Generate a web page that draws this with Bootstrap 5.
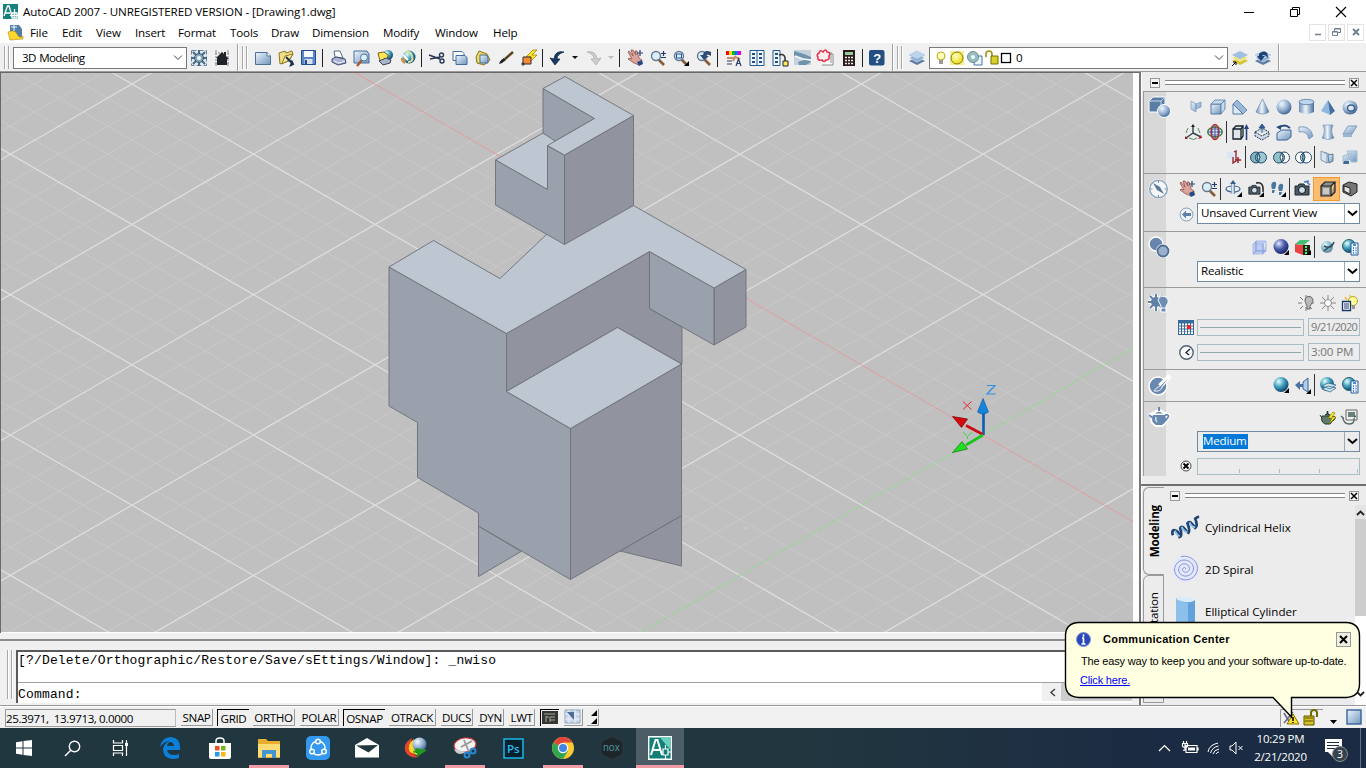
<!DOCTYPE html>
<html lang="en">
<head>
<meta charset="utf-8">
<title>AutoCAD 2007</title>
<link href="https://cdn.jsdelivr.net/npm/bootstrap@5.3.0/dist/css/bootstrap.min.css" rel="stylesheet">
<style>
html,body{width:1366px;height:768px;overflow:hidden}
body{font:11.6px/15px "Open Sans","Noto Sans",sans-serif;color:#000;background:#f0f0f0;letter-spacing:-.15px}
svg{display:block;overflow:visible;flex:none}
.titlebar{height:23px;padding-left:3px;padding-right:2px;background:#fff;letter-spacing:-.08px}
.titlebar .cap{width:46px}
.menubar{height:20px;background:#fff;padding:0 0 2px 8px}
.menubar a{color:#000;text-decoration:none;white-space:nowrap}
.menubar a:nth-of-type(1){width:32px}.menubar a:nth-of-type(2){width:34px}.menubar a:nth-of-type(3){width:39px}
.menubar a:nth-of-type(4){width:43px}.menubar a:nth-of-type(5){width:52px}.menubar a:nth-of-type(6){width:41px}
.menubar a:nth-of-type(7){width:41px}.menubar a:nth-of-type(8){width:71px}.menubar a:nth-of-type(9){width:52px}.menubar a:nth-of-type(10){width:58px}
.mdi{width:17px;height:17px;border:1px solid #e3e3e3;margin-left:2px}
.tools{height:29px;padding-top:1px;border-bottom:1px solid #9a9a9a}
.tools .ic{width:23px}
.grip{width:5px;height:23px;border-left:1px solid #a8a8a8;border-right:1px solid #a8a8a8;box-shadow:1px 0 #fff,inset 1px 0 #fff}
.combo{background:#fff;border:1px solid #7a7a7a;height:22px;line-height:20px;letter-spacing:-.62px;word-spacing:1px}
.tsep{width:7px;height:18px;background:linear-gradient(#222,#222) 2px 0/1px 100% no-repeat}
.tsep.s6{width:6px}.tsep.s5{width:5px}
.tend{width:1px;height:27px;background:#a0a0a0;box-shadow:1px 0 #fff}
.ic{display:flex;align-items:center;justify-content:center;flex:none;position:relative}
.work{height:633px}
.leftcol{width:1139px}
.view{height:561px;border-top:1px solid #696969;border-left:1px solid #696969;background:#fff}
.cmd{height:66px;border-top:2px solid #8c8c8c;margin-top:6px;padding:9px 4px 0 7px;font:13px/15px "Liberation Mono",monospace;letter-spacing:.17px}
.cmdbox{width:1116px;height:53px;background:#fff;border-top:2px solid #5a5a5a;border-left:2px solid #5a5a5a}
.cmdhist{height:31px;border-bottom:1px solid #a0a0a0;padding-top:1px}
.cmdscroll{width:90px;height:18px;background:#f0f0f0;padding-left:3px}
.thumb{background:#cdcdcd}
.dock{width:227px;border-left:2px solid #777;background:#ececec;box-shadow:inset 1px 0 #fff}
.dhead{height:19px;padding:2px 7px 0 9px}
.dhead .rule{height:5px;border-top:1px solid #858585;border-bottom:1px solid #858585;margin:0 4px 0 5px;background:#fff}
.pal .dhead{padding:0 7px 0 6px}
.bx{width:10px;height:10px;border:1px solid #999;background:#f4f4f4}
.panel{margin-left:2px;border-top:1px solid #9b9b9b;border-left:1px solid #9b9b9b;background:linear-gradient(90deg,#d8d8d8 22px,#ececec 22px);padding:1px 5px 0 0}
.prow{padding-top:3px}
.crow{padding-right:1px}
.panel .ic{width:22px;height:22px}
.panel .sp{width:25px;padding-left:2px;background:linear-gradient(#333,#333) 0 0/1px 22px no-repeat}
.pi{left:4px;top:4px}
.hi{background:#fdbd70 !important;outline:1px solid #f39a31}
.combo2{width:163px;height:21px;border:1px solid #6f8ba3;background:#fff;line-height:18px;padding-left:3px;letter-spacing:-.2px}
.combo2 .dd{width:15px;border-left:1px solid #9ab;height:19px !important;padding-bottom:2px}
.medium{background:#0078d7;color:#fff;height:15px;line-height:14px;margin:2px 0 0 2px;padding-right:1px}
.slide{width:107px;height:17px;border:1px solid #a9bdc6;margin-right:4px;padding:7px 2px}
.slide b{display:block;height:1px;background:#8fa9aa}
.val{width:52px;height:18px;border:1px solid #a9bdc6;color:#777;white-space:nowrap;padding-left:2px;line-height:15px}
.tightval{font-size:11px;letter-spacing:-.65px}
.p1{height:82px}.p2{height:58px}.p3{height:56px}.p4{height:82px}.p5{height:32px}.p6{height:75px}
.p4 .crow{margin-top:-1px}
.p4 .crow+.crow{margin-top:0}
.pal{height:221px;border-top:2px solid #707070;padding-left:2px}
.vt{writing-mode:vertical-rl;transform:rotate(180deg);white-space:nowrap}
.tabcol{width:21px}
.tab1{height:88px;border:1px solid #999;border-right:0;border-radius:6px 0 0 6px;margin-top:1px}
.tab2{height:128px;border:1px solid #999;border-radius:6px 0 0 0;padding-top:15px}
.pitem{height:42px;letter-spacing:0}
.pitem span{padding-left:4px}
.sbar{width:11px;background:#fff}
.balloon{left:1065px;top:622px;width:296px;height:97px;font:11px/14px "Liberation Sans",sans-serif;letter-spacing:-.17px;z-index:5}
.status{height:23px;border-top:1px solid #999;padding:3px 4px 1px 5px;box-shadow:inset 0 1px #fff}
.coord{width:171px;height:18px;border:1px solid #999;border-right-color:#bbb;line-height:17px;white-space:pre;letter-spacing:-.4px;flex:none}
.sb{height:17px;border-right:1px solid #999;border-bottom:1px solid #999;text-align:center;line-height:17px;letter-spacing:-.35px;flex:none;white-space:nowrap}
.sb.on{border:0;border-left:1px solid #000;border-top:1px solid #000;line-height:17px}
.w26{width:26px}.w32{width:32px}.w43{width:42px}.w39{width:39px}.w47{width:47px}.w19{width:19px}
.mx5{margin-left:5px}.mx6{margin-left:6px}.mx4{margin-left:4px}
.task{height:40px;background:linear-gradient(90deg,#21373f,#21363f 60%,#1b2b43 85%,#1b2b43);color:#fff}
.task .ti{width:49px;height:40px}
.task .st{width:48px;height:40px}
.task .first{margin-left:2px}
.run::after{content:"";position:absolute;left:5px;right:4px;bottom:0;height:3px;background:#f39ba4}
.act{background:#4c5d65}.act::after{left:0;right:0}
.clock{width:75px;font-size:11.5px;line-height:18px;text-align:center;letter-spacing:-.2px;margin-left:-1px;margin-right:1px}
</style>
</head>
<body class="d-flex flex-column">
<svg width="0" height="0" class="position-absolute"><defs>
<linearGradient id="gb" x1="0" y1="0" x2="1" y2="1"><stop offset="0" stop-color="#eef5fc"/><stop offset="1" stop-color="#6f96bf"/></linearGradient>
<linearGradient id="gh" x1="0" x2="1"><stop offset="0" stop-color="#6b90b8"/><stop offset=".45" stop-color="#eef5fc"/><stop offset="1" stop-color="#476d98"/></linearGradient>
<radialGradient id="gs" cx=".35" cy=".3" r=".75"><stop offset="0" stop-color="#f2f8ff"/><stop offset=".6" stop-color="#8aa8cc"/><stop offset="1" stop-color="#3d5f8c"/></radialGradient>
<radialGradient id="gn" cx=".35" cy=".3" r=".75"><stop offset="0" stop-color="#dfe6ff"/><stop offset=".5" stop-color="#4c5fae"/><stop offset="1" stop-color="#16205f"/></radialGradient>
<radialGradient id="gt" cx=".35" cy=".3" r=".75"><stop offset="0" stop-color="#e0ffff"/><stop offset=".5" stop-color="#3f9dbb"/><stop offset="1" stop-color="#0c3b63"/></radialGradient>
<radialGradient id="gy" cx=".4" cy=".35" r=".7"><stop offset="0" stop-color="#ffffc8"/><stop offset="1" stop-color="#e8d800"/></radialGradient>
</defs></svg>

<div class="titlebar d-flex align-items-center"><i class="ic" data-i="acad"></i><span class="mx5">AutoCAD 2007 - UNREGISTERED VERSION - [Drawing1.dwg]</span>
<span class="ms-auto cap ic"><svg width="10" height="10"><path d="M0 5.500H10" stroke="#000"/></svg></span><span class="cap ic"><svg width="10" height="10" fill="none" stroke="#000"><path d="M.5 2.500h7v7h-7zM2.500 2V.5h7v7H8"/></svg></span><span class="cap ic"><svg width="10" height="10"><path d="M0 0L10 10M10 0L0 10" stroke="#000" stroke-width="1.100"/></svg></span></div>

<nav class="menubar d-flex align-items-center"><i class="ic" style="margin-right:7px" data-i="dwg"></i><a>File</a><a>Edit</a><a>View</a><a>Insert</a><a>Format</a><a>Tools</a><a>Draw</a><a>Dimension</a><a>Modify</a><a>Window</a><a>Help</a>
<span class="mdi ic ms-auto"><svg width="8" height="8"><path d="M1 6.500H7" stroke="#6f7f8e" stroke-width="1.500"/></svg></span><span class="mdi ic"><svg width="9" height="8" fill="none" stroke="#6f7f8e"><path d="M.5 3.500h5v4h-5zM.5 4h5M2.500 3V.5h6v4H6M2.500 1h6"/></svg></span><span class="mdi ic" style="margin-right:2px"><svg width="8" height="8"><path d="M1 1L7 7M7 1L1 7" stroke="#6f7f8e" stroke-width="1.800"/></svg></span></nav>

<div class="tools d-flex align-items-center">
<span class="grip ms-1"></span><span class="combo d-flex justify-content-between align-items-center ms-1 ps-2 pe-1" style="width:174px">3D Modeling<svg width="8" height="5"><path d="M0 .5L4 4.500L8 .5" fill="none" stroke="#444"/></svg></span>
<i class="ic" data-i="gear"></i><i class="ic" data-i="home"></i><span class="tend mx-1"></span><span class="grip me-1"></span>
<i class="ic" data-i="new"></i><i class="ic" data-i="open"></i><i class="ic" data-i="save"></i><b class="tsep"></b>
<i class="ic" data-i="print"></i><i class="ic" data-i="prev"></i><i class="ic" data-i="publish"></i><i class="ic" data-i="globe"></i><b class="tsep s6"></b>
<i class="ic" data-i="cut"></i><i class="ic" data-i="copy"></i><i class="ic" data-i="paste"></i><i class="ic" data-i="brush"></i><i class="ic" data-i="bolt"></i><b class="tsep s5"></b>
<i class="ic" data-i="undo"></i><svg width="14" height="4"><path d="M4 0h6L7 3z" fill="#112"/></svg><i class="ic" data-i="redo"></i><svg width="12" height="4"><path d="M3 0h6L6 3z" fill="#bbb"/></svg><b class="tsep s6"></b>
<i class="ic" data-i="hand"></i><i class="ic" data-i="zoom"></i><i class="ic" data-i="zoomw"></i><i class="ic" data-i="zoomp"></i><b class="tsep"></b>
<i class="ic" data-i="props"></i><i class="ic" data-i="dcenter"></i><i class="ic" data-i="tpal"></i><i class="ic" data-i="sheet"></i><i class="ic" data-i="markup"></i><i class="ic" data-i="calc"></i><b class="tsep s5"></b>
<i class="ic" data-i="help"></i><span class="tend ms-1 me-1"></span><span class="grip" style="margin-right:3px"></span>
<i class="ic" data-i="layers"></i><span class="combo d-flex align-items-center ps-1" style="width:299px;margin-left:1px"><i data-i="lay0"></i><span class="ps-1 me-auto">0</span><svg class="me-1" width="8" height="5"><path d="M0 .5L4 4.500L8 .5" fill="none" stroke="#444"/></svg></span>
<i class="ic" data-i="laycur"></i><i class="ic" data-i="layprev"></i><span class="tend ms-1"></span></div>

<div class="work d-flex">
<div class="leftcol">
<div class="view"><svg width="1132" height="559" viewBox="1 73 1132 559" style="overflow:hidden">
<rect x="1" y="72" width="1132" height="560" fill="#c0c0c0"/>
<path id="minor" stroke="#c9c9c9" fill="none"/><path id="major" stroke="#dfdfdf" fill="none" stroke-width="1.200"/>
<path d="M354 72L1133 521.700" stroke="#e59a9a" stroke-width=".9"/><path d="M1133 348.400L641 632.500" stroke="#8fdb8f" stroke-width="1" stroke-dasharray="7 1.500"/>
<g stroke="#6c6f77" stroke-width=".9" stroke-linejoin="round">
<g fill="#9aa1ac"><path d="M478.500 526L521 551.500L478.500 576.500z"/><path d="M389 267L506.500 333.500V391.500L570.500 428.500V579.500L478.500 526V513L417.500 477.500V422.500L389 406z"/></g>
<g fill="#91949f"><path d="M620 551L681.500 515.500V566z"/><path d="M570.500 428.500L681.500 364V515.500L570.500 579.500z"/><path d="M506.500 333.500L649.500 251.500V308.500L682 327V364L617.500 327.500L506.500 391.500z"/><path d="M714 288L746 269.500V327L714 345z"/></g>
<path fill="#9aa1ac" d="M649.500 251.500L714 288V345L649.500 308.500z"/>
<g fill="#bec6d1"><path d="M506.500 391.500L617.500 327.500L681.500 364L570.500 428.500z"/><path d="M389 267L433.500 240.500L500 278.500L547 234L633.500 205.500L746 269.500L714 288L649.500 251.500L506.500 333.500z"/><path d="M495.500 160L543 133L560 142L547 189.500z"/></g>
<path fill="#9aa1ac" d="M543 88.500L594.500 118.500L555 141L543 133z"/><path fill="#9aa1ac" d="M495.500 160L547.500 189.500V146L564.500 155V244.500L495.500 205z"/>
<path fill="#91949f" d="M564.500 155L633.500 115.500V205.500L564.500 244.500z"/><path fill="#bec6d1" d="M543 88.500L565 76.500L633.500 115.500L564.500 155L547.500 145.500L594.500 118.500z"/></g>
<path d="M983.500 435V411" stroke="#0b5fae" stroke-width="2.600"/><path d="M983 398.500L988.500 412Q983 416 977.500 412z" fill="#1683dc" stroke="#0b4f95" stroke-width=".6"/>
<path d="M983 434.500L966 425.500" stroke="#c90d12" stroke-width="2.800"/><path d="M952.500 416.500L967.500 419L961.500 427.500z" fill="#d4090e" stroke="#700" stroke-width=".7"/>
<path d="M983 435L966 445" stroke="#17c51b" stroke-width="2.800"/><path d="M952.500 452.500L962 441.500L967.500 449z" fill="#1be01e" stroke="#157015" stroke-width=".7"/>
<path d="M963 401.500L971.500 409.500M971.500 401.500L963 409.500" stroke="#e4262c" fill="none"/><path d="M963 432L967.500 436.500L972 432M967.500 436.500V439" stroke="#42d243" fill="none"/><path d="M987 385.500H995L987 394H995.500" stroke="#2f8fe8" fill="none" stroke-width="1.200"/>
<circle cx="746" cy="528" r=".8" fill="#e4e4e4"/>
</svg></div>
<div class="cmd d-flex"><span class="grip" style="height:49px"></span><div class="cmdbox ms-1"><div class="cmdhist">[?/Delete/Orthographic/Restore/Save/sEttings/Window]: _nwiso</div>
<div class="d-flex justify-content-between"><span class="pt-1">Command:</span><span class="cmdscroll d-flex align-items-center"><svg class="mx-1" width="8" height="9"><path d="M6 1L2 4.500L6 8" fill="none" stroke="#444" stroke-width="1.500"/></svg><b class="thumb flex-fill h-100"></b></span></div></div></div>
</div>

<aside class="dock">
<div class="dhead d-flex align-items-center"><span class="bx ic"><svg width="6" height="6"><path d="M0 3H6" stroke="#000" stroke-width="2"/></svg></span><span class="rule flex-fill"></span><span class="bx ic"><svg width="6" height="6"><path d="M0 0L6 6M6 0L0 6" stroke="#000" stroke-width="1.500"/></svg></span></div>

<section class="panel p1 position-relative"><i class="pi position-absolute" data-i="P1"></i>
<div class="prow d-flex justify-content-end"><i class="ic" data-i="poly"></i><i class="ic" data-i="box"></i><i class="ic" data-i="wedge"></i><i class="ic" data-i="cone"></i><i class="ic" data-i="sphere"></i><i class="ic" data-i="cyl"></i><i class="ic" data-i="pyr"></i><i class="ic" data-i="torus"></i></div>
<div class="prow d-flex justify-content-end"><i class="ic" data-i="ucs"></i><i class="ic" data-i="orbit"></i><i class="ic sp" data-i="extrude"></i><i class="ic" data-i="pull"></i><i class="ic" data-i="revolve"></i><i class="ic" data-i="sweep"></i><i class="ic" data-i="loft"></i><i class="ic" data-i="plane"></i></div>
<div class="prow d-flex justify-content-end"><i class="ic" data-i="move3"></i><i class="ic sp" data-i="union"></i><i class="ic" data-i="subtract"></i><i class="ic" data-i="inter"></i><i class="ic sp" data-i="secp"></i><i class="ic" data-i="flat"></i></div></section>

<section class="panel p2 position-relative"><i class="pi position-absolute" data-i="P2"></i>
<div class="prow d-flex justify-content-end"><i class="ic" data-i="hand"></i><i class="ic" data-i="zoom"></i><i class="ic sp" data-i="orb3"></i><i class="ic" data-i="swivel"></i><i class="ic" data-i="walk"></i><i class="ic sp" data-i="camera"></i><i class="ic sp hi" data-i="persp"></i><i class="ic" data-i="par"></i></div>
<div class="prow crow d-flex justify-content-end"><i class="ic" data-i="back"></i><span class="combo2 d-flex justify-content-between">Unsaved Current View<span class="dd ic"><svg width="9" height="6"><path d="M0 1L4.500 5L9 1" fill="none" stroke="#000" stroke-width="2"/></svg></span></span></div></section>

<section class="panel p3 position-relative"><i class="pi position-absolute" data-i="P3"></i>
<div class="prow d-flex justify-content-end"><i class="ic" data-i="xray"></i><i class="ic" data-i="vshade"></i><i class="ic" data-i="vcol"></i><i class="ic sp" data-i="vedge"></i><i class="ic" data-i="vset"></i></div>
<div class="prow crow d-flex justify-content-end"><span class="combo2 d-flex justify-content-between">Realistic<span class="dd ic"><svg width="9" height="6"><path d="M0 1L4.500 5L9 1" fill="none" stroke="#000" stroke-width="2"/></svg></span></span></div></section>

<section class="panel p4 position-relative"><i class="pi position-absolute" data-i="P4"></i>
<div class="prow d-flex justify-content-end"><i class="ic" data-i="light"></i><i class="ic" data-i="sun"></i><i class="ic" data-i="lightl"></i></div>
<div class="prow crow d-flex justify-content-end align-items-center"><i class="ic" data-i="cal"></i><span class="slide"><b></b></span><span class="val tightval">9/21/2020</span></div>
<div class="prow crow d-flex justify-content-end align-items-center"><i class="ic" data-i="clock"></i><span class="slide"><b></b></span><span class="val">3:00 PM</span></div></section>

<section class="panel p5 position-relative"><i class="pi position-absolute" data-i="P5"></i>
<div class="prow d-flex justify-content-end"><i class="ic" data-i="tsph"></i><i class="ic" data-i="mapm"></i><i class="ic sp" data-i="mlay"></i><i class="ic" data-i="vset"></i></div></section>

<section class="panel p6 position-relative"><i class="pi position-absolute" data-i="P6"></i>
<div class="prow d-flex justify-content-end"><i class="ic" data-i="tea"></i><i class="ic" data-i="tea2"></i></div>
<div class="prow crow d-flex justify-content-end"><span class="combo2 d-flex justify-content-between" style="background:#ececec"><span class="medium">Medium</span><span class="dd ic"><svg width="9" height="6"><path d="M0 1L4.500 5L9 1" fill="none" stroke="#000" stroke-width="2"/></svg></span></span></div>
<div class="prow crow d-flex justify-content-end align-items-center"><i class="ic" data-i="stop"></i><span class="slide me-0" style="width:163px;padding:10px 0 0"><svg width="160" height="5"><path d="M41.500 0v4M81.500 0v4M121.500 0v4M159.500 0v4" stroke="#a9bdc6"/></svg></span></div></section>

<div style="height:8px"></div>
<div class="pal d-flex">
<div class="tabcol d-flex flex-column"><div class="tab1 d-flex justify-content-center align-items-center"><b class="vt">Modeling</b></div><div class="tab2 d-flex justify-content-center"><span class="vt" style="height:60px">Annotation</span></div></div>
<div class="flex-fill d-flex flex-column"><div class="dhead d-flex align-items-center"><span class="bx ic"><svg width="6" height="6"><path d="M0 3H6" stroke="#000" stroke-width="2"/></svg></span><span class="rule flex-fill"></span><span class="bx ic"><svg width="6" height="6"><path d="M0 0L6 6M6 0L0 6" stroke="#000" stroke-width="1.500"/></svg></span></div>
<div class="d-flex flex-fill"><div class="flex-fill" style="padding:1px 0 0 7px"><div class="pitem d-flex align-items-center"><i data-i="helix"></i><span>Cylindrical Helix</span></div><div class="pitem d-flex align-items-center"><i data-i="spiral"></i><span>2D Spiral</span></div><div class="pitem d-flex align-items-center"><i data-i="ecyl"></i><span>Elliptical Cylinder</span></div></div>
<div class="sbar d-flex flex-column align-items-center"><svg width="11" height="14"><rect width="11" height="14" fill="#e4e4e4"/><path d="M2 10L5.500 6.500L9 10" fill="none" stroke="#222" stroke-width="1.800"/></svg><b class="thumb w-100" style="height:97px"></b><svg class="mt-auto mb-1" width="11" height="14"><path d="M2 5L5.500 8.500L9 5" fill="none" stroke="#222" stroke-width="1.800"/></svg></div></div></div>
</div>
</aside>
</div>

<footer class="status d-flex">
<span class="coord">25.3971,  13.9713, 0.0000</span><span class="sb w32 mx5">SNAP</span><span class="sb w32 mx4 on">GRID</span><span class="sb w43 mx4">ORTHO</span><span class="sb w39 mx5">POLAR</span><span class="sb w43 mx4 on">OSNAP</span><span class="sb w47 mx4">OTRACK</span><span class="sb w32 mx5">DUCS</span><span class="sb w26 mx5">DYN</span><span class="sb w26 mx5">LWT</span>
<span class="sb w19 mx5 on"><i data-i="mspace"></i></span><span class="sb w19 mx5"><i data-i="pspace"></i></span><span class="sb ms-1 ps-1" style="width:12px"><svg width="6" height="15"><path d="M6 1V7H0zM6 9V15H0z"/></svg></span>
<span class="ms-auto" data-i="tray"></span>
</footer>

<footer class="task d-flex align-items-center">
<i class="ic st" data-i="win"></i><i class="ic st" data-i="search"></i><i class="ic st" data-i="tview"></i><i class="ic ti first" data-i="edge"></i><i class="ic ti" data-i="store"></i><i class="ic ti run" data-i="folder"></i><i class="ic ti" data-i="share"></i><i class="ic ti" data-i="mail"></i><i class="ic ti" data-i="idm"></i><i class="ic ti run" data-i="snip"></i><i class="ic ti" data-i="ps"></i><i class="ic ti run" data-i="chrome"></i><i class="ic ti" data-i="nox"></i><i class="ic st run act" data-i="acadbig"></i>
<i class="ms-auto" data-i="systray"></i><div class="clock">10:29 PM<br>2/21/2020</div><i data-i="notif"></i>
</footer>

<div class="balloon position-absolute"><svg class="position-absolute" width="296" height="97"><path d="M14 .5H281Q294.500 1 294.500 14V62Q294.500 75 281 75.500H226.500V95L208 75.500H14Q.5 75 .5 62V14Q.5 1 14 .5z" fill="#ffffe1" stroke="#000" stroke-width="1.400"/></svg>
<div class="position-relative"><div class="d-flex align-items-center pt-2 ps-2" style="margin-top:1px"><svg style="margin-left:3px" width="15" height="16"><circle cx="7.500" cy="8.500" r="7" fill="#2947b8" stroke="#8091d0"/><path d="M7.500 3.200v2.500M7.500 7v6M6 7h2M5.500 13h4" stroke="#fff" stroke-width="1.700"/></svg><b class="ms-2 ps-1" style="letter-spacing:.29px;margin-left:9px;padding-left:1px">Communication Center</b><span class="ic ms-auto" style="width:15px;height:15px;border:1px solid #999;background:#f0f0e0;margin-right:10px"><svg width="7" height="7"><path d="M0 0L7 7M7 0L0 7" stroke="#000" stroke-width="2"/></svg></span></div>
<div style="padding:7px 0 0 16px;white-space:nowrap">The easy way to keep you and your software up-to-date.</div><div style="padding:5px 0 0 15px"><u style="color:#00f">Click here.</u></div></div></div>

<script src="https://cdn.jsdelivr.net/npm/bootstrap@5.3.0/dist/js/bootstrap.bundle.min.js"></script>
<script>
// icon drawings: name -> [width, height, markup]
const Z='fill="none" stroke="#38618d" stroke-width="1.200"';
const corner='<path d="M16 11v5h-5z" fill="#000"/>';
const lens='<path d="M8 9L14 15" stroke="#885b38" stroke-width="2.600"/><circle cx="6" cy="6" r="4.500" fill="#d9eefb" stroke="#68788d" stroke-width="1.400"/>';
const lay='<path d="M0 11l8-4 8 4-8 4z" fill="#5d7ca5"/><path d="M0 8l8-4 8 4-8 4z" fill="#8fb0d4" stroke="#fff" stroke-width=".5"/><path d="M0 5l8-4 8 4-8 4z" fill="#bcd4ee" stroke="#9cb8d6" stroke-width=".5"/>';
const cam='<path d="M1 5h3l1-2h5l1 2h4v9H1z" fill="#4b5a66" stroke="#1e2b35"/><circle cx="8" cy="9" r="3.500" fill="#cfe0ec" stroke="#111"/>';
const calcp='<path d="M9 4h7v12H9z" fill="#eef6ff" stroke="#245c9a"/><path d="M11 6h3M11 9h1M13.500 9h1M11 11.500h1M13.500 11.500h1M11 14h1M13.500 14h1" stroke="#246bc0" stroke-width="1.300"/>';
const pot='<path d="M2 7Q0 12 5 15H10Q14 12 13 7zM5 6Q7.500 3 10 6zM13 8Q18 7 13 12M2 9L0 6" fill="FILL" stroke="LINE" stroke-width="1"/><path d="M7.500 2v3" stroke="LINE" stroke-width="1.600"/>';
const burst='M8 0v4M8 12v4M0 8h4M12 8h4M2 2l3 3M11 11l3 3M14 2l-3 3M5 11l-3 3';
let sp='M14 14';for(let t=0;t<=80;t++){const a=t/80*Math.PI*6.6,r=.4+a*.64;sp+=`L${(14+r*Math.cos(a)).toFixed(1)} ${(14-r*Math.sin(a)*.95).toFixed(1)}`;}
const I={
acad:[15,15,'<path d="M0 0h15v15H0z" fill="#177f7c"/><path d="M1 12L4.500 2H6L9 12M2.500 9H7M9 9h5v5H9zM11.500 5V14M7 11.500h8" fill="none" stroke="#fff" stroke-width="1.300"/>'],
dwg:[15,15,'<path d="M2 0h9l3 4v10H2z" fill="#527da5"/><path d="M0 7Q7 4 9 9T15 11V14L2 15z" fill="#ffd72c" stroke="#b08b13" stroke-width=".6"/><path d="M3 2h6M6 0v6" stroke="#e8ffff"/>'],
gear:[16,16,'<rect x=".5" y=".5" width="15" height="15" fill="#dbe8f1" stroke="#6d8296" stroke-dasharray="5 2"/><path d="'+burst+'" stroke="#4c6c86" stroke-width="2"/><circle cx="8" cy="8" r="4.500" fill="#86a5ba" stroke="#3a566e"/><circle cx="8" cy="8" r="2" fill="#f4f8fb"/>'],
home:[16,16,'<path d="M1 3H16M2 0V16M14 0V16M1 14H16" stroke="#888" stroke-dasharray="2 1"/><path d="M2 8l6-6 2 2V2h2v4l3 3h-2v6H3V8z" fill="#202428"/>'],
new:[16,14,'<path d="M.5 1.500h12l3 3v9H.5z" fill="url(#gb)" stroke="#4d7299"/><path d="M12 1v4h4" fill="#fff" stroke="#4d7299"/>'],
open:[16,16,'<path d="M1 3l6-2 1 2 6-2 1 3-4 7-9 3z" fill="#f0dd84" stroke="#8e7a25"/><path d="M4 14L7 6l8-2-4 6z" fill="#fff0a5" stroke="#8e7a25"/><path d="M8 7l6 6M13 15l2-1-1-2z" stroke="#17304e" stroke-width="2"/>'],
save:[15,15,'<path d="M.5 .5h14v14H.5z" fill="#5c86c8" stroke="#244b93"/><path d="M3 1h9v6H3z" fill="#f4f8ff"/><path d="M3.500 9h8v5h-8z" fill="#d5e1ed"/><path d="M5 10v4" stroke="#244b93" stroke-width="2"/>'],
print:[16,16,'<path d="M4 7L3 1h6l3 7z" fill="#fff" stroke="#566b89"/><path d="M1 9l4-2 9 2 1 4-8 2-6-3z" fill="#a9b5d0" stroke="#3d4a6c"/><path d="M3 11l5 2 6-2" fill="none" stroke="#eef"/>'],
prev:[17,16,'<path d="M1 1h13l2 3v9H1z" fill="url(#gb)" stroke="#47719b"/><path d="M9 10L4 16" stroke="#a8562c" stroke-width="2.200"/><circle cx="11" cy="7.500" r="3.500" fill="#d6f1fb" stroke="#577892"/>'],
publish:[16,16,'<circle cx="11" cy="5" r="5" fill="url(#gt)"/><path d="M1 3l6-1 4 3-1 5-7 1z" fill="#ffe75a" stroke="#7c6512"/><path d="M2 11l7-3 5 2-1 3-7 2z" fill="#aab6c7" stroke="#38425a"/>'],
globe:[16,16,'<circle cx="9" cy="7" r="6.500" fill="url(#gt)"/><path d="M5 3Q10 0 12 6T8 12" fill="none" stroke="#d7e2a0" stroke-width="2"/><path d="M1 8h5l-1 6Q0 12 1 8" fill="#c69657"/><path d="M3 5l5 5" stroke="#fff" stroke-width="2"/>'],
cut:[16,12,'<path d="M0 3L11 7M1 7L11 5" stroke="#263858" stroke-width="1.400"/><circle cx="12.500" cy="3" r="2" fill="none" stroke="#263858" stroke-width="1.400"/><circle cx="13" cy="9" r="2" fill="none" stroke="#263858" stroke-width="1.400"/>'],
copy:[16,14,'<path d="M1 .5h9l2 2v7H1z" fill="#fff" stroke="#426d9c"/><path d="M4 4.500h9l2 2v7H4z" fill="url(#gb)" stroke="#426d9c"/>'],
paste:[16,16,'<path d="M4 1l8 3 3 6-6 5-7-2-1-6z" fill="#ead967" stroke="#8a7519"/><path d="M5 5h6l2 2v6H5z" fill="url(#gb)" stroke="#426d9c"/>'],
brush:[16,16,'<path d="M15 2L7 9" stroke="#5e4123" stroke-width="2.400"/><path d="M1 14Q5 13 8 10L6 8Q2 10 1 14" fill="#222"/>'],
bolt:[16,16,'<path d="M12 0L5 7h5l-2 6 8-8h-5l5-5z" fill="#ffe320" stroke="#8d7a00" stroke-width=".7"/><path d="M2 7h8v7H2z" fill="#f98a33" stroke="#333"/><path d="M0 14h4M2 12v4" stroke="#234"/>'],
undo:[16,16,'<path d="M15 2Q6 0 5 9L1 8l5 7 5-6-3 0Q8 4 15 2" fill="#183a68" stroke="#0a1d3a" stroke-width=".7"/>'],
redo:[16,16,'<path d="M1 2Q10 0 11 9l4-1-5 7-5-6h3Q8 4 1 2" fill="#cdcdcd" stroke="#aaa" stroke-width=".7"/>'],
hand:[16,16,'<path d="M2 1l4 5L4 0l2 0 3 5-1-4 2 0 2 7 3 2-3 5-5-2-6-4 1-1 3 1-4-7z" fill="#dba39a" stroke="#8b5650" stroke-width=".8"/><path d="M10 12l5-2 1 4-4 2z" fill="#234a86"/><path d="M13 0v6M10 3h6" stroke="#26446d" stroke-width="1.200"/>'],
zoom:[16,16,lens+'<path d="M11 3.500h5M13.500 1v5M11 7.500h5" stroke="#243a6b" stroke-width="1.200"/>'],
zoomw:[16,16,lens+'<rect x="3.500" y="4" width="5" height="4" fill="none" stroke="#2655a2"/>'+corner],
zoomp:[16,16,lens+'<path d="M15 2Q8-1 7 5H4l4 5 5-4h-3Q11 3 15 6z" fill="#2d4c73"/>'],
props:[17,16,'<path d="M1 1h3v4H1z" fill="red"/><path d="M4 1h3v4H4z" fill="#fd0"/><path d="M7 1h3v4H7z" fill="#0b2"/><path d="M10 1h3v4h-3z" fill="#26f"/><path d="M13 1h3v4h-3z" fill="#d0d"/><path d="M2 8h7l2-2M8 11l2-4 5 2" fill="none" stroke="#c98a67" stroke-width="2"/><path d="M2 11h5M2 14h5M11 16L13.500 9 16 16M12 13.500h3" fill="none" stroke="#283f68" stroke-width="1.200"/>'],
dcenter:[16,16,'<path d="M1 .5h14v15H1zM8 1v14" fill="#eef7ff" stroke="#235a99"/><path d="M3 4h3M3 8h3M3 12h3M10 4h3M10 8h3M10 12h3" stroke="#254c7a" stroke-width="2"/>'],
tpal:[16,16,'<path d="M1 .5h7v15H1z" fill="#eef7ff" stroke="#235a99"/><path d="M3 4h3M3 8h3M3 12h3" stroke="#254c7a" stroke-width="2"/><path d="M7 5Q14 3 13 11" fill="none" stroke="#333" stroke-width="1.500"/><path d="M11 11h5v5h-5z" fill="#ffe75a" stroke="#223"/>'],
sheet:[17,15,'<path d="M0 0h17v15H0z" fill="#c3d2dc"/><path d="M0 1l10 3 7 3v3L9 9 0 6zM4 12l9-3 4 3-5 3H5z" fill="#6f93ab"/><path d="M1 6l8 3 8 1" fill="none" stroke="#f7fafc" stroke-width="1.600"/>'],
markup:[17,16,'<path d="M6 4h10v11H5M14 2v11" fill="#fff" stroke="#888"/><path d="M2 3Q3-1 6 2 9-2 10 2q4 0 2 4 1 4-3 4-2 3-4 0-5 1-4-3Q-1 5 2 3z" fill="#fee" stroke="#e0364f" stroke-width="1.600"/>'],
calc:[12,16,'<rect width="12" height="16" fill="#2b1d1e"/><rect x="2" y="2" width="8" height="3" fill="#96cc9b"/><path d="M2 7.500h8M2 10.500h8M2 13.500h8" stroke="#f0e8e8" stroke-width="1.600" stroke-dasharray="2 1"/>'],
help:[16,16,'<rect width="15.500" height="15.500" rx="2" fill="#234f82"/><text x="4.200" y="12.500" font-family="Liberation Sans" font-weight="bold" font-size="13" font-style="normal" fill="#fff">?</text>'],
layers:[16,16,lay],
lay0:[78,18,'<circle cx="7" cy="7" r="4" fill="#ffffb8" stroke="#bba81f"/><path d="M5 11h4v4H5z" fill="#999"/><rect x="16" y="2" width="14" height="14" fill="#f2ef8a"/><circle cx="23" cy="9" r="6" fill="url(#gy)" stroke="#877c1c"/><path d="M40 7h8v9h-8z" fill="#e8f3fd" stroke="#4876a6"/><circle cx="39" cy="8" r="5.500" fill="#9cbcbd" stroke="#6b8f95"/><circle cx="39" cy="8" r="2" fill="#dff"/><path d="M52 8V5q0-3 3-3t3 3v4" fill="none" stroke="#9c9310" stroke-width="1.600"/><path d="M57 7h7v8h-7z" fill="#d8d02b" stroke="#786f00"/><rect x="67.500" y="4.500" width="9" height="9" fill="#fff" stroke="#000" stroke-width="1.300"/>'],
laycur:[16,16,'<path d="M0 11l8-4 8 4-8 4z" fill="#d5c330"/><path d="M0 8l8-4 8 4-8 4z" fill="#eee58b"/><path d="M0 5l8-4 8 4-8 4z" fill="#9fbde0"/><path d="M0 16l4-4M1 12h3v3" stroke="#000" fill="none"/>'],
layprev:[16,16,lay+'<path d="M13 8Q13 0 7 2Q3 3 4 6l-2 0 4 5 4-5H7Q9 3 13 8z" fill="#1d4275"/>'],
poly:[14,14,'<path d="M2 1l5 3v8L2 9zM7 4l5-2v5L7 9z" fill="url(#gb)" stroke="#7498bd" stroke-width=".7"/>'],
box:[16,16,'<path d="M1 5h10v10H1z" fill="url(#gb)" stroke="#56789e"/><path d="M1 5l4-4h10l-4 4zM11 5l4-4v9l-4 5z" fill="#c5daee" stroke="#56789e" stroke-width=".8"/>'],
wedge:[16,16,'<path d="M1 5L5 1L15 11 11 15z" fill="#9ab8d8" stroke="#56789e" stroke-width=".8"/><path d="M1 5L11 15H1z" fill="#dce8f4" stroke="#56789e"/>'],
cone:[15,16,'<path d="M7.500 0L14 13Q7.500 17 1 13z" fill="url(#gh)" stroke="#6b87a5" stroke-width=".7"/>'],
sphere:[16,16,'<circle cx="8" cy="8" r="7.500" fill="url(#gs)"/>'],
cyl:[15,16,'<path d="M0 3v10q7.500 4 15 0V3z" fill="url(#gh)"/><ellipse cx="7.500" cy="3" rx="7.500" ry="2.700" fill="#bdd6ec" stroke="#55799f" stroke-width=".8"/>'],
pyr:[14,15,'<path d="M7 0L9 15 0 11z" fill="#8fb8e0"/><path d="M7 0L14 11 9 15z" fill="#3f6e9f"/>'],
torus:[16,15,'<ellipse cx="8" cy="7.500" rx="7.500" ry="7" fill="url(#gs)"/><ellipse cx="9" cy="8" rx="3.500" ry="3" fill="#dfe8f2" stroke="#3e628c" stroke-width="1.400"/>'],
ucs:[17,16,'<path d="M8 1v8L1 14M8 9l8 4" fill="none" stroke="#344" stroke-width="1.400"/><path d="M3 4L1 9M13 4l2 5M4 14q5 3 8 0" stroke="#5a8a62" fill="none"/><path d="M6 3L8 0l2 3z" fill="#222"/><path d="M0 12v3h3zM13 15l4-1-1-3z" fill="#a31f28"/>'],
orbit:[16,16,'<ellipse cx="8" cy="8" rx="7.300" ry="5" fill="none" stroke="#2d7a3a" stroke-width="1.300"/><ellipse cx="8" cy="8" rx="4" ry="7.500" fill="none" stroke="#c0282b" stroke-width="1.400"/><path d="M1 8h14M8 1v14M5 5h6v6H5z" stroke="#293a99" stroke-width=".8" fill="none"/>'],
extrude:[16,16,'<path d="M1 5h8v10H1zM1 5l3-3h7L9 5M11 2v10l-2 3" fill="#dfe6ec" stroke="#14202b" stroke-width="1.300"/><path d="M14.500 16V4" stroke="#20457c" stroke-width="1.600"/><path d="M12 5l2.500-5L17 5z" fill="#20457c"/>'],
pull:[16,17,'<path d="M1 8l7-4 7 4-7 4zM1 8v4l7 4 7-4V8" fill="#ccd9e8" stroke="#24364e" stroke-dasharray="2 1"/><path d="M8 9V2M5 4l3-4 3 4z" fill="#32588c" stroke="#32588c"/>'],
revolve:[16,16,'<path d="M1 9l5-3h9v7l-4 3H1z" fill="url(#gb)" stroke="#3d6593"/><path d="M14 4Q8-1 3 4" fill="none" stroke="#234b7c" stroke-width="1.700"/><path d="M0 3l5-2v5z" fill="#234b7c"/>'],
sweep:[16,15,'<path d="M1 2q11-2 14 9l-4 3Q9 5 1 7z" fill="url(#gb)" stroke="#7d9dbf"/>'],
loft:[14,16,'<path d="M2 1h10q-3 7 1 13-6 3-12 0Q5 8 2 1z" fill="url(#gh)" stroke="#7799bd" stroke-width=".7"/>'],
plane:[16,12,'<path d="M6 0h9l-5 8H1z" fill="url(#gb)" stroke="#7f9dbd"/><path d="M1 8l9 0v3H1z" fill="#9cb6d2"/>'],
move3:[16,16,'<path d="M1 2l7 2v7L1 9z" fill="#d8e7f5"/><path d="M8 3l2-1v10l-3 2v-6" fill="none" stroke="#8d1d26" stroke-width="1.300"/><path d="M12 8v6M9 11h6" stroke="#a01f2b" stroke-width="1.500"/>'],
union:[17,13,'<circle cx="6" cy="6.500" r="5.500" fill="#7fb3bd" stroke="#24476c"/><circle cx="11" cy="6.500" r="5.500" fill="#9ac8d0" stroke="#24476c"/><path d="M8.500 2q-3 4 0 9 3-5 0-9" fill="none" stroke="#24476c"/>'],
subtract:[17,13,'<circle cx="11" cy="6.500" r="5.500" fill="#fff" stroke="#24476c"/><circle cx="6" cy="6.500" r="5.500" fill="#8fc1c6" stroke="#24476c"/><path d="M8.500 2q-3 4 0 9 3-5 0-9" fill="#fff" stroke="#24476c"/>'],
inter:[17,13,'<circle cx="6" cy="6.500" r="5.500" fill="#fff" stroke="#24476c"/><circle cx="11" cy="6.500" r="5.500" fill="#fff" stroke="#24476c"/><path d="M8.500 2q-3 4 0 9 3-5 0-9" fill="#6da9b1" stroke="#24476c"/>'],
secp:[16,15,'<path d="M1 1l6 3v9L1 10zM4 2l5 2v8l-3 1" fill="#d9e4ee" stroke="#7f9bb5"/><path d="M8 5l5-1v7l-4 2z" fill="url(#gb)" stroke="#5d7f9e"/>'],
flat:[16,15,'<path d="M5 1h10v11H9zM1 6l8-3v6l-8 3z" fill="url(#gb)" stroke="#a3bdd6"/><path d="M1 14h6v-3H2z" fill="#3d6997"/>'],
orb3:[16,16,'<ellipse cx="7" cy="8" rx="7" ry="3" '+Z+'/><path d="M5 2h4v11H5z" fill="url(#gh)"/><path d="M4 3l3-4 3 4z" fill="#38618d"/>'+corner],
swivel:[17,16,'<g transform="translate(0 2) scale(.8)">'+cam+'</g><path d="M8 2q8-2 7 9" fill="none" stroke="#222" stroke-width="1.500"/>'+corner],
walk:[16,16,'<path d="M3 1q4-1 3 4L5 8H2Q0 3 3 1zM2 9h3l-1 3H2zM10 3q4-1 3 4l-1 3H9Q7 5 10 3zM9 11h3l-1 3H9z" fill="#49789f"/>'+corner],
camera:[17,16,cam+'<path d="M10 1l5-1M13 1l3 3" stroke="#447ac0" stroke-width="1.500"/>'],
persp:[16,16,'<path d="M1 5h10v10H1zM1 5l4-4h10l-4 4M15 1v10l-4 4" fill="#8f938f" stroke="#222" stroke-width="1.200"/><path d="M3 7h6v6H3z" fill="#c9cac5"/>'],
par:[16,16,'<path d="M1 4l6-3 8 2v8l-6 4-8-4z" fill="#777" stroke="#222"/><path d="M2 5l6 2v6L2 10z" fill="#dfe3e2" stroke="#222"/>'],
back:[15,15,'<circle cx="7.500" cy="7.500" r="6.500" fill="#eef3f8" stroke="#8aa1b9"/><path d="M3 7.500l4-4v2.500h5v3H7v2.500z" fill="#5f7fa3"/>'],
xray:[15,15,'<path d="M1 4h10v10H1zM1 4l3-3h10l-3 3M14 1v10l-3 3" fill="#bccbf2" stroke="#a9bdeb"/><path d="M4 1v10h10M4 11l-3 3M11 4v10" fill="none" stroke="#7f97d6"/>'],
vshade:[16,16,'<circle cx="8" cy="7.500" r="7.500" fill="url(#gn)"/>'+corner],
vcol:[16,16,'<path d="M0 5l8 1v10l-8-3z" fill="#e94242"/><path d="M0 5l5-4h10l-6 5z" fill="#47bd77"/><path d="M9 6h6v10H8V6z" fill="#222"/><path d="M10 8h2M10 11h2M10 14h2" stroke="#4f5" stroke-width="2"/>'+corner],
vedge:[16,14,'<circle cx="7" cy="7" r="6" fill="url(#gt)" opacity=".6"/><path d="M4 11L13 4M4 6q7 4 10-4" stroke="#344b5e" fill="none" stroke-width="1.500"/>'],
vset:[17,16,'<circle cx="7" cy="7" r="6.500" fill="url(#gt)" stroke="#305c6a"/>'+calcp],
light:[16,16,'<path d="'+burst+'" stroke="#777"/><path d="M7 6a4 4 0 1 1 7 2l-2 3v3h-3v-3z" fill="#bbb" stroke="#666"/>'],
sun:[16,16,'<path d="'+burst+'" stroke="#888"/><circle cx="8" cy="8" r="3.500" fill="#fff" stroke="#888"/>'],
lightl:[17,16,'<circle cx="11" cy="6" r="4.500" fill="#ffffa0" stroke="#b5a219"/><path d="M10 10h3v4h-3z" fill="#998"/><path d="M3 2l2 3M8 0v2" stroke="#fb3" stroke-width="1.500"/><path d="M.5 6.500h8v9h-8z" fill="#fff" stroke="#15356a" stroke-width="1.300"/><path d="M2 9h5M2 11h5M2 13h5" stroke="#15356a"/>'],
cal:[16,15,'<path d="M0 0h16v15H0z" fill="#396a9c"/><path d="M1 4.500h14M1 7.500h14M1 10.500h14M1 13h14" stroke="#fff" stroke-width="2" stroke-dasharray="2 1"/><path d="M9 5h4v4H9z" fill="#e22"/>'],
clock:[15,15,'<circle cx="7.500" cy="7.500" r="6.700" fill="#f8fbff" stroke="#51606f" stroke-width="1.400"/><path d="M11 4L7 7.500 10 10" fill="none" stroke="#223" stroke-width="1.300"/>'],
tsph:[16,16,'<circle cx="8" cy="7.500" r="7.500" fill="url(#gt)"/>'+corner],
mapm:[16,15,'<path d="M0 7l5-4v3h3v3H5v3z" fill="#4c72a3"/><path d="M8 4l5-4v14l-5-3z" fill="#aecdf0" stroke="#3f6594"/>'+corner],
mlay:[16,16,'<circle cx="7" cy="7" r="7" fill="url(#gt)"/><path d="M2 12l6-3 8 2-6 4zM2 9l6-3 8 2-6 4z" fill="#c9e6f4" stroke="#2a5a79" stroke-width=".7"/>'],
tea:[16,16,pot.replace('FILL','#607b6c').replaceAll('LINE','#26382e')+'<path d="M13 3L8 9h4l-3 6 7-7h-4l3-4z" fill="#ffed22" stroke="#776b00" stroke-width=".6"/>'],
tea2:[16,16,'<path d="M4 1h11v10H4z" fill="#eee" stroke="#666"/><path d="M6 3h7v5H6z" fill="#668477"/><path d="M1 8q0 7 7 7 5-1 4-6M1 9l-2-2M12 8l2-1" fill="none" stroke="#566" stroke-width="1.400"/>'],
stop:[12,12,'<circle cx="6" cy="6" r="5" fill="#fff" stroke="#444"/><path d="M3.500 3.500l5 5M8.500 3.500l-5 5" stroke="#000" stroke-width="1.900"/>'],
P1:[23,23,'<path d="M1 5l4-4h12v11l-4 4H1z" fill="#5a7da6" stroke="#fff"/><path d="M1 5h12v11M13 5l4-4" fill="none" stroke="#c7d9ec"/><circle cx="16" cy="15" r="6.500" fill="url(#gs)" stroke="#fff"/>'],
P2:[23,23,'<circle cx="10.500" cy="11" r="10" fill="#fff"/><circle cx="10.500" cy="11" r="8.800" fill="#f3f6f9" stroke="#8da4bd" stroke-width="1.500"/><path d="M5 5l7 4 4 7-7-4z" fill="#5c7897"/><path d="M10.500 3v2M10.500 17v2M2.500 11h2M16.500 11h2" stroke="#78909f"/>'],
P3:[23,23,'<circle cx="8" cy="8" r="7" fill="#6886ad" stroke="#fff" stroke-width="1.500"/><circle cx="15" cy="15" r="7" fill="#fff"/><circle cx="15" cy="15" r="5.500" fill="#9ab1cb" stroke="#506e95" stroke-width="1.800"/>'],
P4:[23,23,'<path d="M8 2v17M0 10h16M2 4l13 13M2 16L14 4" stroke="#fff" stroke-width="4"/><path d="M8 2v17M0 10h16M2 4l13 13M2 16L14 4" stroke="#5f80a5" stroke-width="2"/><circle cx="8" cy="10" r="5" fill="#5f80a5"/><path d="M10 8a5.200 5.200 0 1 1 10 3l-2 3v6h-5v-6z" fill="#6c8db1" stroke="#fff"/><path d="M13 16h5" stroke="#fff"/>'],
P5:[24,23,'<circle cx="10" cy="12" r="9" fill="#6a89b0" stroke="#fff" stroke-width="1.500"/><path d="M22 2L12 12" stroke="#fff" stroke-width="5"/><path d="M22 2L12 12Q8 13 6 17q7 1 8-4z" fill="#7893b2" stroke="#fff" stroke-width=".8"/>'],
P6:[24,22,'<g stroke="#fff" stroke-width="4" fill="#fff"><path d="M5 8Q2 16 8 19H14Q20 16 17 8zM7 7Q11 3 15 7z"/></g><path d="M17 9Q24 8 17 15M5 11L1 8" fill="none" stroke="#fff" stroke-width="4"/><path d="M17 9Q24 8 17 15M5 12L1 9" fill="none" stroke="#6687ae" stroke-width="1.800"/><path d="M5 9Q2 16 8 19H14Q20 16 17 9zM7 7.500Q11 4 15 7.500zM10 1h2v4h-2z" fill="#6687ae"/><path d="M8 11q-1 3 1 5" stroke="#cfe0f1" fill="none" stroke-width="1.500"/>'],
helix:[30,26,'<g transform="translate(0 1) scale(.97 .92)"><path d="M2 22Q0 16 4 16.500T9 24Q12 23 9.500 14.500Q11 11 14 15T18 19.500Q20 18 17 9Q19 6 22 10T25 14Q28 12 25 4Q27 2 29 2" fill="none" stroke="#1e4474" stroke-width="2.800"/><path d="M4 17q2 5 5 6M11 13q2 5 6 6M19 8q2 5 6 5.500" fill="none" stroke="#91bde6" stroke-width="2"/></g>'],
spiral:[30,28,'<circle cx="14" cy="14" r="13" fill="#e4e8fb"/><path d="'+sp+'" fill="none" stroke="#8795df"/>'],
ecyl:[30,30,'<path d="M5 2v25q8 5 19 0V4Q16 8 5 2" fill="#62a2dc"/><path d="M5 2v25q6 4 12 3V7Q10 6 5 2" fill="#8dbfeb"/><path d="M5 3q7-5 19 1-6 5-19-1" fill="#d9ecfb"/>'],
mspace:[17,15,'<path d="M1 1h16v13H1z" fill="#33372f"/><path d="M3 4h11M5 6v6M9 12V7h5M5 7h3M9 10h5" stroke="#a9aaa0" fill="none"/>'],
pspace:[17,15,'<path d="M1 1h15v13H1z" fill="#c8d8e8" stroke="#8da1b5"/><path d="M5 1v13M1 5h15M1 10h15M11 1v13" stroke="#eef"/><path d="M3 3l7 8V3z" fill="#4b6f96"/>'],
tray:[80,18,'<path d="M-1.500 18V.5H41" fill="none" stroke="#999"/><path d="M2 4l6 10M11 3L2 14" stroke="#668" stroke-width="1.500"/><path d="M11 5L17 15H5z" fill="#ffe22c" stroke="#857200"/><path d="M11 8v4M11 13v1" stroke="#000" stroke-width="1.500"/><path d="M22 7h10v9H22z" fill="#d4c326" stroke="#5e5500"/><path d="M29 7V4q0-3 3-3t3 3v4" fill="none" stroke="#726900" stroke-width="2"/><path d="M23 9h8M23 12h8" stroke="#5e5500"/><path d="M48 11h7l-3.500 4z"/><rect x="65" y="1" width="14" height="14" fill="url(#gb)" stroke="#35629a" stroke-width="1.400"/>'],
win:[16,16,'<path d="M0 2.300L6.500 1.300V7.500H0zM7.500 1.100L16 0V7.500H7.500zM0 8.500H6.500V14.700L0 13.700zM7.500 8.500H16V16L7.500 14.900z" fill="#fff"/>'],
search:[17,17,'<circle cx="10.500" cy="6.500" r="5.200" fill="none" stroke="#fff" stroke-width="1.400"/><path d="M6.500 10.500L1 16" stroke="#fff" stroke-width="1.500"/>'],
tview:[17,16,'<path d="M1.500 0V3h9V0M1.500 16V13h9v3M1.500 5.500h9v5h-9zM14.500 0V16" fill="none" stroke="#fff" stroke-width="1.200"/><path d="M13 3h3v3h-3z" fill="#fff"/>'],
edge:[21,22,'<path d="M0 10Q2 0 11 0q9 1 9 10v3H7q1 5 7 5 3 0 5-1v4q-3 1-7 1Q3 21 3 12q1-6 7-8-6 0-10 6zM7 9h7q-1-4-3.500-4T7 9z" fill="#0a80db"/>'],
store:[22,23,'<path d="M7 8V4q0-3 4-3t4 3v4" fill="none" stroke="#fff" stroke-width="1.500"/><path d="M0 6h22v14q0 2-2 2H2q-2 0-2-2z" fill="#fff"/><path d="M6 9h4.500v4.500H6z" fill="#e8502a"/><path d="M12 9h4.500v4.500H12z" fill="#76b41b"/><path d="M6 15h4.500v4.500H6z" fill="#1da0e8"/><path d="M12 15h4.500v4.500H12z" fill="#fcb515"/>'],
folder:[22,19,'<path d="M0 0h8l2 2h12v17H0z" fill="#e8ad30"/><path d="M0 5h22v13H0z" fill="#ffdc75"/><path d="M4 19v-8h14v8h-4v-4H8v4z" fill="#4394d0"/>'],
share:[24,24,'<rect width="24" height="24" rx="5" fill="#3399ee"/><circle cx="12" cy="12" r="7" fill="none" stroke="#fff" stroke-width="1.500"/><g fill="#3399ee" stroke="#fff" stroke-width="1.500"><circle cx="12" cy="5.500" r="2.300"/><circle cx="6" cy="15.500" r="2.300"/><circle cx="18" cy="15.500" r="2.300"/></g>'],
mail:[24,20,'<path d="M0 7L12 0l12 7v12.500H0z" fill="#fff"/><path d="M1 7.500L23 7 13.500 14.500z" fill="#21363f"/>'],
idm:[24,22,'<path d="M8 1Q-1 6 1 14q4 8 14 6Q4 17 8 1" fill="#e2442c"/><path d="M10 2Q2 8 6 15l9 4Q7 11 10 2" fill="#ffd728"/><circle cx="15.500" cy="7.500" r="7" fill="url(#gs)"/><path d="M11 14q-3-1-1 2l3-1v5l10-7-11-2z" fill="#1f9a20"/>'],
snip:[24,22,'<ellipse cx="12" cy="8" rx="11" ry="7" fill="#f4f4f4" stroke="#d33" transform="rotate(-8 12 8)"/><path d="M1 12q3 8 12 3" fill="#ccc"/><path d="M8 10L19 4M11 3L16 15" stroke="#999" stroke-width="1.800"/><circle cx="14" cy="18" r="2.500" fill="none" stroke="#2889d5" stroke-width="2"/><circle cx="20" cy="14" r="2.500" fill="none" stroke="#2889d5" stroke-width="2"/>'],
ps:[21,21,'<rect x="1" y="1" width="19" height="19" fill="#07202d" stroke="#1ab7e8" stroke-width="1.500"/><text x="4" y="15" font-family="Open Sans" font-size="11.500" font-weight="600" fill="#27bff0" font-style="normal">Ps</text>'],
chrome:[22,22,'<circle cx="11" cy="11" r="11" fill="#fbca32"/><path d="M11 11L1.500 5.500A11 11 0 0 1 20.500 5.500H11z" fill="#e24437"/><path d="M1.500 5.500A11 11 0 0 0 11 22l5-8-5-3z" fill="#32a452"/><circle cx="11" cy="11" r="5.200" fill="#fff"/><circle cx="11" cy="11" r="4" fill="#4285e4"/>'],
nox:[22,24,'<path d="M11 0L22 6v12l-11 6L0 18V6z" fill="#1c262b" stroke="#303a3f"/><text x="2" y="15" font-family="Inter" font-size="10" font-style="normal" fill="#4b9096">nox</text>'],
acadbig:[24,24,'<path d="M.7.7h22.600v22.600H.7z" fill="#128078" stroke="#fff" stroke-width="1.400"/><path d="M12 1.400h10.600V14z" fill="#6ad0bb"/><path d="M3 19L7.500 4h2L14 19M5 14h7" fill="none" stroke="#fff" stroke-width="2"/><path d="M15 13h5v6h-5zM17.500 9v4M12 16h3M20 16h3M17.500 19v4" fill="none" stroke="#fff" stroke-width="1.200"/>'],
systray:[86,16,'<g fill="none" stroke="#fff" stroke-width="1.200"><path d="M1 11l5.500-5.500L12 11M28 5.500h11v7H28zM40 7.500v3M27 4v5q0 2-2 1M24.500 3.500h5v3q-2.500 2-5 0zM25.500 1v2.500M28.500 1v2.500"/><path d="M50 12Q51 5 60 3M52.500 13q2-6 8-7M55 14q1-4 6-5M58 14q1-2 3-2" stroke-width="1"/><path d="M72 6h2l4-4v12l-4-4h-2zM80.500 6l4 4M84.500 6l-4 4" stroke-width="1"/></g><path d="M30 7.500h7v3h-7z" fill="#fff"/>'],
notif:[47,28,'<path d="M6 5h17v13h-9v5l-5-5H6z" fill="#fff"/><path d="M8 8.500h12M8 11.500h12M8 14.500h8" stroke="#1b2b43"/><circle cx="21" cy="20" r="7.500" fill="#38424d" stroke="#828c95"/><text x="18" y="24" font-family="Open Sans" font-size="10.500" font-style="normal" fill="#fff">3</text><path d="M41.500-6V34" stroke="#637080"/>']
};
document.querySelectorAll('[data-i]').forEach(e=>{const d=I[e.dataset.i];
 e.innerHTML=`<svg width="${d[0]}" height="${d[1]}" viewBox="0 0 ${d[0]} ${d[1]}">${d[2]}</svg>`;});
// isometric drafting grid around the UCS origin
const s=.5774,step=28.08;let mi='',ma='';
for(let k=-45;k<=45;k++){if(k===0)continue;const c=435+k*step;
 const p=`M0 ${c-983*s}L1136 ${c+153*s}M0 ${c+983*s}L1136 ${c-153*s}`;
 if(k%5)mi+=p;else ma+=p;}
document.getElementById('minor').setAttribute('d',mi);document.getElementById('major').setAttribute('d',ma);
</script>
</body>
</html>
